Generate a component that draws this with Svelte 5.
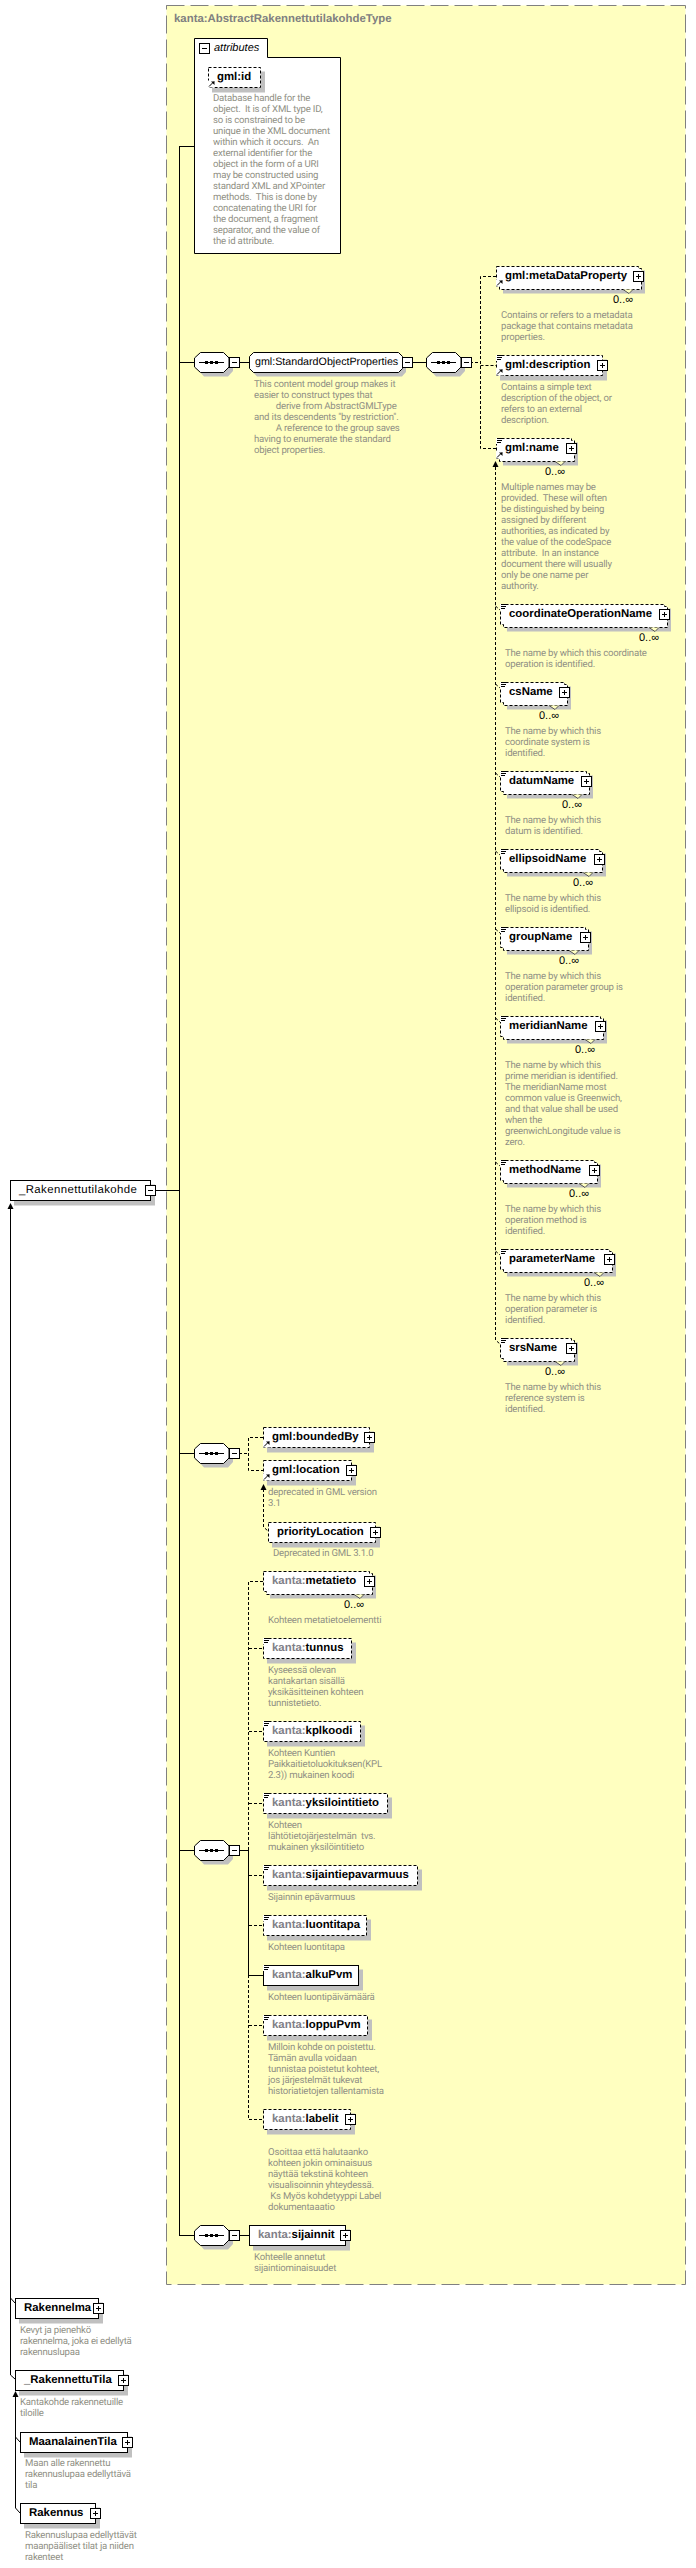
<script lang="ts">
	type Node = {
		x: number;
		cy: number;
		r: number;
		name: string;
		prefix?: string;
		optional?: boolean; // dashed outline
		plus?: boolean;
		doc?: boolean; // three lines at the top left
		ref?: boolean; // arrow at the bottom left
		many?: number; // centre of the 0..inf text
		root?: boolean;
		desc?: string[];
		dx?: number;
		dy?: number;
	};

	const the = 'The name by which this';

	const nodes: Node[] = [
		{ x: 10, cy: 1190, r: 150, name: '_Rakennettutilakohde', root: true },
		{ x: 208, cy: 77, r: 260, name: 'gml:id', optional: true, ref: true },
		{ x: 496, cy: 276, r: 638, name: 'gml:metaDataProperty', optional: true, plus: true, ref: true, many: 623, dy: 315,
			desc: ['Contains or refers to a metadata', 'package that contains metadata', 'properties.'] },
		{ x: 496, cy: 365, r: 602, name: 'gml:description', optional: true, plus: true, ref: true, doc: true, dy: 387.5,
			desc: ['Contains a simple text', 'description of the object, or', 'refers to an external', 'description.'] },
		{ x: 496, cy: 448, r: 571, name: 'gml:name', optional: true, plus: true, ref: true, doc: true, many: 555, dy: 487.5,
			desc: ['Multiple names may be', 'provided.  These will often', 'be distinguished by being', 'assigned by different', 'authorities, as indicated by', 'the value of the codeSpace', 'attribute.  In an instance', 'document there will usually', 'only be one name per', 'authority.'] },
		{ x: 500, cy: 614, r: 664, name: 'coordinateOperationName', optional: true, plus: true, doc: true, many: 649, dy: 653.5,
			desc: ['The name by which this coordinate', 'operation is identified.'] },
		{ x: 500, cy: 692, r: 564, name: 'csName', optional: true, plus: true, doc: true, many: 549, dy: 731.5,
			desc: [the, 'coordinate system is', 'identified.'] },
		{ x: 500, cy: 781, r: 586, name: 'datumName', optional: true, plus: true, doc: true, many: 572, dy: 820.5,
			desc: [the, 'datum is identified.'] },
		{ x: 500, cy: 859, r: 599, name: 'ellipsoidName', optional: true, plus: true, doc: true, many: 583, dy: 898.5,
			desc: [the, 'ellipsoid is identified.'] },
		{ x: 500, cy: 937, r: 585, name: 'groupName', optional: true, plus: true, doc: true, many: 569, dy: 976.5,
			desc: [the, 'operation parameter group is', 'identified.'] },
		{ x: 500, cy: 1026, r: 600, name: 'meridianName', optional: true, plus: true, doc: true, many: 585, dy: 1065.5,
			desc: [the, 'prime meridian is identified.', 'The meridianName most', 'common value is Greenwich,', 'and that value shall be used', 'when the', 'greenwichLongitude value is', 'zero.'] },
		{ x: 500, cy: 1170, r: 594, name: 'methodName', optional: true, plus: true, doc: true, many: 579, dy: 1209.5,
			desc: [the, 'operation method is', 'identified.'] },
		{ x: 500, cy: 1259, r: 609, name: 'parameterName', optional: true, plus: true, doc: true, many: 594, dy: 1298.5,
			desc: [the, 'operation parameter is', 'identified.'] },
		{ x: 500, cy: 1348, r: 571, name: 'srsName', optional: true, plus: true, doc: true, many: 555, dy: 1387.5,
			desc: [the, 'reference system is', 'identified.'] },
		{ x: 263, cy: 1437, r: 369, name: 'gml:boundedBy', optional: true, plus: true, ref: true },
		{ x: 263, cy: 1470, r: 351, name: 'gml:location', optional: true, plus: true, ref: true, dx: 268, dy: 1492.5,
			desc: ['deprecated in GML version', '3.1'] },
		{ x: 268, cy: 1532, r: 375, name: 'priorityLocation', optional: true, plus: true, dx: 273, dy: 1553.5,
			desc: ['Deprecated in GML 3.1.0'] },
		{ x: 263, cy: 1581, r: 369, prefix: 'kanta:', name: 'metatieto', optional: true, plus: true, many: 354, dy: 1620.5,
			desc: ['Kohteen metatietoelementti'] },
		{ x: 263, cy: 1648, r: 351, prefix: 'kanta:', name: 'tunnus', optional: true, doc: true, dy: 1670.5,
			desc: ['Kyseessä olevan', 'kantakartan sisällä', 'yksikäsitteinen kohteen', 'tunnistetieto.'] },
		{ x: 263, cy: 1731, r: 360, prefix: 'kanta:', name: 'kplkoodi', optional: true, doc: true, dy: 1753.5,
			desc: ['Kohteen Kuntien', 'Paikkaitietoluokituksen(KPL', '2.3)) mukainen koodi'] },
		{ x: 263, cy: 1803, r: 387, prefix: 'kanta:', name: 'yksilointitieto', optional: true, doc: true, dy: 1825.5,
			desc: ['Kohteen', 'lähtötietojärjestelmän  tvs.', 'mukainen yksilöintitieto'] },
		{ x: 263, cy: 1875, r: 417, prefix: 'kanta:', name: 'sijaintiepavarmuus', optional: true, doc: true, dy: 1897.5,
			desc: ['Sijainnin epävarmuus'] },
		{ x: 263, cy: 1925, r: 366, prefix: 'kanta:', name: 'luontitapa', optional: true, doc: true, dy: 1947.5,
			desc: ['Kohteen luontitapa'] },
		{ x: 263, cy: 1975, r: 358, prefix: 'kanta:', name: 'alkuPvm', doc: true, dy: 1997.5,
			desc: ['Kohteen luontipäivämäärä'] },
		{ x: 263, cy: 2025, r: 367, prefix: 'kanta:', name: 'loppuPvm', optional: true, doc: true, dy: 2047.5,
			desc: ['Milloin kohde on poistettu.', 'Tämän avulla voidaan', 'tunnistaa poistetut kohteet,', 'jos järjestelmät tukevat', 'historiatietojen tallentamista'] },
		{ x: 263, cy: 2119, r: 350, prefix: 'kanta:', name: 'labelit', optional: true, plus: true, dy: 2152.5,
			desc: ['Osoittaa että halutaanko', 'kohteen jokin ominaisuus', 'näyttää tekstinä kohteen', 'visualisoinnin yhteydessä.', ' Ks Myös kohdetyyppi Label', 'dokumentaaatio'] },
		{ x: 249, cy: 2235, r: 345, prefix: 'kanta:', name: 'sijainnit', plus: true, dx: 254, dy: 2257.5,
			desc: ['Kohteelle annetut', 'sijaintiominaisuudet'] },
		{ x: 15, cy: 2308, r: 98, name: 'Rakennelma', plus: true, dx: 20, dy: 2330.5,
			desc: ['Kevyt ja pienehkö', 'rakennelma, joka ei edellytä', 'rakennuslupaa'] },
		{ x: 15, cy: 2380, r: 123, name: '_RakennettuTila', plus: true, dx: 20, dy: 2402.5,
			desc: ['Kantakohde rakennetuille', 'tiloille'] },
		{ x: 20, cy: 2442, r: 127, name: 'MaanalainenTila', plus: true, dx: 25, dy: 2463.5,
			desc: ['Maan alle rakennettu', 'rakennuslupaa edellyttävä', 'tila'] },
		{ x: 20, cy: 2513, r: 95, name: 'Rakennus', plus: true, dx: 25, dy: 2535.5,
			desc: ['Rakennuslupaa edellyttävät', 'maanpääliset tilat ja niiden', 'rakenteet'] }
	];

	// free standing annotations
	const notes = [
		{ x: 213, y: 98.5, lines: ['Database handle for the', 'object.  It is of XML type ID,', 'so is constrained to be', 'unique in the XML document', 'within which it occurs.  An', 'external identifier for the', 'object in the form of a URI', 'may be constructed using', 'standard XML and XPointer', 'methods.  This is done by', 'concatenating the URI for', 'the document, a fragment', 'separator, and the value of', 'the id attribute.'] },
		{ x: 254, y: 384.5, lines: ['This content model group makes it', 'easier to construct types that', '          derive from AbstractGMLType', 'and its descendents "by restriction".', '          A reference to the group saves', 'having to enumerate the standard', 'object properties.'] }
	];

	const sequences = [
		{ x: 194, cy: 362 },
		{ x: 426, cy: 362 },
		{ x: 194, cy: 1453 },
		{ x: 194, cy: 1850 },
		{ x: 194, cy: 2235 }
	];

	const solid = [
		'M179.5 146V2235',
		'M179 146.5H194',
		'M156 1190.5H179',
		'M179 362.5H194M239 362.5H250M412 362.5H426',
		'M179 1453.5H194',
		'M179 1850.5H194M239 1850.5H249',
		'M179 2235.5H194M239 2235.5H249',
		'M248.5 1850V1975.5H263',
		'M10.5 1208V2375L15 2379',
		'M10.5 2298L15 2303',
		'M15.5 2396V2508L20 2513',
		'M15.5 2437L20 2442'
	];

	const dashed = [
		'M470 362.5H480',
		'M496 276.5H480.5V448.5H496',
		'M480.5 365.5H496',
		'M495.5 467V1340L500 1344',
		...[614, 692, 781, 859, 937, 1026, 1170, 1259].map((cy) => `M495.5 ${cy - 8}L500 ${cy - 4}`),
		'M239 1453.5H248',
		'M263 1437.5H248.5V1470.5H263',
		'M263.5 1489V1527L268 1531',
		'M263 1581.5H248.5V1850',
		...[1648, 1731, 1803, 1875, 1925, 2025].map((cy) => `M249 ${cy + 0.5}H263`),
		'M248.5 1975V2119.5H263'
	];

	const arrows = [
		[10.5, 1203],
		[15.5, 2391],
		[495.5, 461],
		[263.5, 1484]
	];
</script>

<div class="canvas">
	<svg class="wires" width="696" height="2568" viewBox="0 0 696 2568">
		<rect class="panel" x="166.5" y="5.5" width="519" height="2279" />

		<!-- attributes -->
		<path class="box" d="M194.5 38.5H267.5V57.5H340.5V253.5H194.5Z" />

		{#each solid as d}
			<path class="wire" {d} />
		{/each}
		{#each dashed as d}
			<path class="wire dash" {d} />
		{/each}
		{#each arrows as [x, y]}
			<path class="head" d="M{x} {y}L{x + 3} {y + 6}H{x - 3}Z" />
		{/each}

		{#each sequences as s}
			<g>
				<path class="shade" d="M{s.x + 10} {s.cy - 6}H{s.x + 34}L{s.x + 39} {s.cy - 1}V{s.cy + 9}L{s.x + 34} {s.cy + 14.5}H{s.x + 10}L{s.x + 5} {s.cy + 9}Z" />
				<path class="box" d="M{s.x + 6.5} {s.cy - 9.5}H{s.x + 29.5}L{s.x + 35} {s.cy - 4}V{s.cy + 5}L{s.x + 29.5} {s.cy + 10.5}H{s.x + 6.5}L{s.x + 0.5} {s.cy + 5}V{s.cy - 4}Z" />
				<path class="wire" d="M{s.x + 5} {s.cy + 0.5}H{s.x + 30}" />
				<rect x={s.x + 11} y={s.cy - 1} width="3" height="3" />
				<rect x={s.x + 16} y={s.cy - 1} width="3" height="3" />
				<rect x={s.x + 21} y={s.cy - 1} width="3" height="3" />
				<rect class="box" x={s.x + 35.5} y={s.cy - 4.5} width="10" height="10" />
				<path class="wire" d="M{s.x + 38} {s.cy + 0.5}H{s.x + 43}" />
			</g>
		{/each}

		<!-- content model group -->
		<path class="shade" d="M257 356H402L406 360V372L402 376.5H257L253 372V360Z" />
		<path class="box" d="M253.5 352.5H398.5L402.5 356.5V368.5L398.5 372.5H253.5L249.5 368.5V356.5Z" />
		<rect class="box" x="402.5" y="357.5" width="10" height="10" />
		<path class="wire" d="M405 362.5H410" />

		{#each nodes as n}
			{@const top = n.cy - 9.5}
			{@const w = n.r - n.x}
			<g>
				{#if n.many}
					<rect class="shade" x={n.x + 7} y={top + 4} width={w} height="23" />
					<path class="box" class:dash={n.optional} d="M{n.x + 0.5} {top}H{n.r + 0.5}V{top + 2}H{n.r + 3.5}V{top + 23}H{n.x + 3.5}V{top + 20}H{n.x + 0.5}Z" />
					<path class="notch" d="M{n.many} {top + 23}L{n.many + 6} {top + 27}L{n.many + 10} {top + 23}" />
				{:else}
					<rect class="shade" x={n.x + 4} y={top + 4} width={w + 1} height="21" />
					<rect class="box" class:dash={n.optional} x={n.x + 0.5} y={top} width={w} height="20" />
				{/if}
				{#if n.doc}
					<path d="M{n.x} {top - 0.5}h6v6h-6z" fill="#fff" />
					<path class="wire" d="M{n.x + 1} {top}h5M{n.x + 1} {top + 2}h5M{n.x + 1} {top + 4}h4" />
				{/if}
				{#if n.ref}
					<path d="M{n.x} {top + 13}h7v7h-7z" fill="#fff" />
					<path class="wire" d="M{n.x + 1} {top + 19}L{n.x + 6} {top + 14}" />
					<path class="head" d="M{n.x + 3} {top + 14}h3.5v3.5z" />
				{/if}
				{#if n.plus}
					<rect class="box" x={n.r - 4.5} y={n.cy - 4.5} width="10" height="10" />
					<path class="wire" d="M{n.r - 2} {n.cy + 0.5}H{n.r + 3}M{n.r + 0.5} {n.cy - 2}V{n.cy + 3}" />
				{/if}
			</g>
		{/each}

		<!-- minus on the root element and on the attributes tab -->
		<rect class="box" x="145.5" y="1185.5" width="10" height="10" />
		<path class="wire" d="M148 1190.5H153" />
		<rect class="box" x="199.5" y="43.5" width="10" height="10" />
		<path class="wire" d="M202 48.5H207" />
	</svg>

	<div class="title" style="left:174px;top:12px">kanta:AbstractRakennettutilakohdeType</div>
	<div class="attrs" style="left:214px;top:41px">attributes</div>
	<div class="group" style="left:255px;top:353px">gml:StandardObjectProperties</div>

	{#each nodes as n}
		<div class="label" class:root={n.root} style="left:{n.x + 9}px;top:{n.cy - 9}px">
			{#if n.prefix}<span class="prefix">{n.prefix}</span>{/if}{n.name}
		</div>
		{#if n.many}
			<div class="many" style="left:{n.many - 20}px;top:{n.cy + 17}px">0..∞</div>
		{/if}
		{#if n.desc}
			<div class="desc" style="left:{n.dx ?? n.x + 5}px;top:{(n.dy ?? 0) - 5.5}px">
				{#each n.desc as line}
					<div>{line}</div>
				{/each}
			</div>
		{/if}
	{/each}

	{#each notes as note}
		<div class="desc" style="left:{note.x}px;top:{note.y - 5.5}px">
			{#each note.lines as line}
				<div>{line}</div>
			{/each}
		</div>
	{/each}
</div>

<style>
	:global(body) {
		margin: 0;
		background: #fff;
	}

	.canvas {
		position: relative;
		width: 696px;
		height: 2568px;
		overflow: hidden;
		font-family: 'Liberation Sans', sans-serif;
		color: #000;
		text-rendering: geometricPrecision;
	}

	.wires {
		position: absolute;
		left: 0;
		top: 0;
	}

	.panel {
		fill: #ffffc0;
		stroke: #808080;
		stroke-dasharray: 18 6;
	}

	.wire {
		fill: none;
		stroke: #000;
	}

	.box {
		fill: #fff;
		stroke: #000;
	}

	.dash {
		stroke-dasharray: 3 2;
	}

	.shade {
		fill: #c0c0c0;
	}

	.head {
		fill: #000;
	}

	.notch {
		fill: #ffffc0;
		stroke: #555;
	}

	.title,
	.attrs,
	.group,
	.label,
	.many,
	.desc {
		position: absolute;
		white-space: pre;
	}

	.title {
		font-size: 11.4px;
		font-weight: bold;
		line-height: 15px;
		color: #808080;
	}

	.attrs {
		font-size: 11px;
		font-style: italic;
		line-height: 15px;
	}

	.group {
		font-size: 10.7px;
		line-height: 18px;
	}

	.label {
		font-size: 11.4px;
		font-weight: bold;
		line-height: 18px;
		color: #000;
	}

	.root {
		font-weight: normal;
		letter-spacing: 0.4px;
	}

	.prefix {
		color: #808088;
	}

	.many {
		width: 40px;
		font-size: 11px;
		line-height: 14px;
		text-align: center;
	}

	.desc {
		font-family: Roboto, 'Liberation Sans', sans-serif;
		font-size: 9.6px;
		letter-spacing: -0.2px;
		line-height: 11px;
		color: #8f8f84;
	}
</style>
